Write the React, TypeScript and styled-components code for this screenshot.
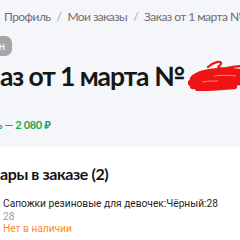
import React from "react";
import styled, { createGlobalStyle } from "styled-components";

const Global = createGlobalStyle`
  html, body { margin: 0; padding: 0; background: #ffffff; }
  body { width: 240px; height: 240px; overflow: hidden; font-family: Lato, "Noto Sans", sans-serif; }
`;

const Page = styled.div`
  width: 240px;
  height: 240px;
  overflow: hidden;
  display: flex;
  flex-direction: column;
`;

const Top = styled.section`
  background: #f5f6f9;
  height: 147px;
  flex: none;
  display: flex;
  flex-direction: column;
  padding-top: 9px;
  box-sizing: border-box;
`;

const Crumbs = styled.nav`
  display: flex;
  align-items: center;
  gap: 6px;
  padding-left: 4px;
  font-size: 12px;
  line-height: 16px;
  letter-spacing: -0.55px;
  color: #6e6e72;
  white-space: nowrap;
`;

const Sep = styled.span`
  color: #a2a2a6;
`;

const BackChip = styled.div`
  margin-top: 11px;
  margin-left: -28px;
  width: 40px;
  height: 20px;
  flex: none;
  border-radius: 7px;
  background: #a6a6a9;
  color: #ffffff;
  font-size: 11px;
  line-height: 20px;
  text-align: right;
  padding-right: 7px;
  box-sizing: border-box;
`;

const TitleRow = styled.div`
  display: flex;
  align-items: flex-start;
  gap: 4px;
  margin-top: 3px;
  white-space: nowrap;
`;

const Title = styled.h1`
  margin: 0;
  font-size: 26.5px;
  line-height: 34px;
  font-weight: 700;
  color: #161616;
  letter-spacing: -1.1px;
`;

const TitleMask = styled.div`
  margin-top: 1px;
  flex: none;
`;

const Price = styled.div`
  margin-top: 24px;
  margin-left: -3px;
  font-size: 11px;
  line-height: 14px;
  font-weight: 700;
  color: #26a84f;
  letter-spacing: -0.3px;
  white-space: nowrap;
`;

const Section = styled.section`
  display: flex;
  flex-direction: column;
  padding-top: 17px;
`;

const Heading = styled.h2`
  margin: 0;
  font-size: 16px;
  line-height: 20px;
  font-weight: 700;
  color: #141414;
  letter-spacing: -0.4px;
  white-space: nowrap;
`;

const Item = styled.div`
  display: flex;
  flex-direction: column;
  padding-left: 3px;
  margin-top: 14px;
  font-family: Roboto, "Noto Sans", sans-serif;
  font-size: 10.2px;
  line-height: 12.5px;
`;

const ItemName = styled.div`
  color: #262626;
  white-space: nowrap;
`;

const ItemSize = styled.div`
  color: #9a9a9a;
`;

const Stock = styled.div`
  color: #ff8a33;
`;

const SmallScribble = () => (
  <svg width="14" height="10" viewBox="0 0 14 10">
    <path d="M2 5 C5 2, 10 2, 14 3 M2 7 C6 7, 10 6, 14 6" stroke="#f01414" strokeWidth="4" fill="none" strokeLinecap="round" />
  </svg>
);

const BigScribble = () => (
  <svg width="53" height="31" viewBox="0 0 53 31">
    <path d="M20 7 C25 2, 34 0, 33 4 C31 7, 26 9, 38 8 C44 7, 50 6, 53 6" stroke="#f01414" strokeWidth="2.2" fill="none" strokeLinecap="round" />
    <path
      d="M5 19 C10 13, 24 11, 40 11 C46 11, 50 12, 53 12 M3 23 C14 18, 32 17, 53 17 M5 26 C18 24, 34 23, 53 22 M10 28 C22 28, 34 27, 46 26"
      stroke="#f01414"
      strokeWidth="6.5"
      fill="none"
      strokeLinecap="round"
    />
    <path d="M26 16 C34 15, 40 15, 48 16 M14 22 C20 21, 24 21, 30 21" stroke="#ff9a9a" strokeWidth="0.8" fill="none" />
  </svg>
);

export default function App() {
  return (
    <Page>
      <Global />
      <Top>
        <Crumbs>
          <span>Профиль</span>
          <Sep>/</Sep>
          <span>Мои заказы</span>
          <Sep>/</Sep>
          <span>Заказ от 1 марта №</span>
          <SmallScribble />
        </Crumbs>
        <BackChip>н</BackChip>
        <TitleRow>
          <Title>аз от 1 марта №</Title>
          <TitleMask>
            <BigScribble />
          </TitleMask>
        </TitleRow>
        <Price>ь — 2 080 ₽</Price>
      </Top>
      <Section>
        <Heading>ары в заказе (2)</Heading>
        <Item>
          <ItemName>Сапожки резиновые для девочек:Чёрный:28</ItemName>
          <ItemSize>28</ItemSize>
          <Stock>Нет в наличии</Stock>
        </Item>
      </Section>
    </Page>
  );
}
